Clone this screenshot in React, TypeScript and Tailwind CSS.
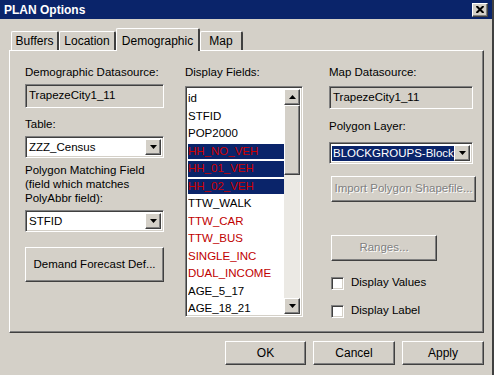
import React from 'react';

const raised =
  'border border-t-white border-l-white border-r-[#404040] border-b-[#404040] shadow-[inset_-1px_-1px_0_#808080]';
const sunken =
  'border border-t-[#808080] border-l-[#808080] border-r-white border-b-white shadow-[inset_1px_1px_0_#404040,inset_-1px_-1px_0_#d4d0c8]';

function Arrow({ up = false }: { up?: boolean }) {
  return (
    <svg width="7" height="4" viewBox="0 0 7 4">
      {up ? <path d="M3.5 0 L7 4 L0 4 Z" fill="#000" /> : <path d="M0 0 L7 0 L3.5 4 Z" fill="#000" />}
    </svg>
  );
}

function Combo({ value, selected = false, className = '' }: { value: string; selected?: boolean; className?: string }) {
  return (
    <div className={`${sunken} bg-white h-[22px] flex items-center pl-[2px] pr-[2px] ${className}`}>
      <div className="flex-1 min-w-0 flex items-center">
        <span className={`px-[1px] leading-[15px] whitespace-nowrap overflow-hidden ${selected ? 'bg-[#0a246a] text-white' : 'text-black'}`}>
          {value}
        </span>
      </div>
      <div className={`${raised} w-[16px] h-[16px] bg-[#d4d0c8] flex items-center justify-center shrink-0`}>
        <Arrow />
      </div>
    </div>
  );
}

function Button({ label, disabled = false, className = '' }: { label: string; disabled?: boolean; className?: string }) {
  return (
    <div className={`${raised} bg-[#d4d0c8] flex items-center justify-center ${className}`}>
      <span className={disabled ? 'text-[#808080] [text-shadow:1px_1px_0_#fff]' : 'text-black'}>{label}</span>
    </div>
  );
}

function Checkbox({ label }: { label: string }) {
  return (
    <div className="flex items-center gap-[7px] h-[14px]">
      <div className={`${sunken} bg-white w-[13px] h-[13px]`} />
      <span>{label}</span>
    </div>
  );
}

const fields: Array<[string, number]> = [
  ['id', 0],
  ['STFID', 0],
  ['POP2000', 0],
  ['HH_NO_VEH', 2],
  ['HH_01_VEH', 2],
  ['HH_02_VEH', 2],
  ['TTW_WALK', 0],
  ['TTW_CAR', 1],
  ['TTW_BUS', 1],
  ['SINGLE_INC', 1],
  ['DUAL_INCOME', 1],
  ['AGE_5_17', 0],
  ['AGE_18_21', 0],
];

function FieldList() {
  return (
    <div className={`${sunken} bg-white h-[231px] w-[118px] flex p-[2px] mt-[7px]`}>
      <div className="flex-1 pl-[0px] pt-[1px] overflow-hidden">
        {fields.map(([name, kind]) => (
          <div key={name} className="h-[17.5px] flex items-center">
            <div
              className={`h-[15.5px] w-full flex items-center leading-none ${
                kind === 2 ? 'bg-[#0a246a] text-[#d00000]' : kind === 1 ? 'text-[#c00000]' : 'text-black'
              }`}
            >
              {name}
            </div>
          </div>
        ))}
      </div>
      <div className="w-[16px] flex flex-col shrink-0">
        <div className={`${raised} h-[16px] bg-[#d4d0c8] flex items-center justify-center`}>
          <Arrow up />
        </div>
        <div className={`${raised} h-[70px] bg-[#d4d0c8]`} />
        <div className="flex-1 bg-[#ebe9e4]" />
        <div className={`${raised} h-[16px] bg-[#d4d0c8] flex items-center justify-center`}>
          <Arrow />
        </div>
      </div>
    </div>
  );
}

export default function App() {
  const tabs = [
    { name: 'Buffers', w: 'w-[48px]' },
    { name: 'Location', w: 'w-[57px]' },
    { name: 'Demographic', w: 'w-[84px]' },
    { name: 'Map', w: 'w-[43px]' },
  ];
  return (
    <div className="w-[494px] h-[375px] bg-[#d4d0c8] text-[11.5px] text-black font-['Liberation_Sans',Arial,sans-serif] border-r-2 border-r-[#404040] overflow-hidden flex flex-col">
      <div className="h-[19px] bg-[#0a246a] flex items-center pl-[4px] pr-[4px]">
        <span className="text-white font-bold text-[12px] flex-1">PLAN Options</span>
        <div className={`${raised} w-[16px] h-[14px] bg-[#d4d0c8] flex items-center justify-center`}>
          <svg width="8" height="7" viewBox="0 0 8 7">
            <path d="M0.5 0 L7.5 7 M7.5 0 L0.5 7" stroke="#000" strokeWidth="2" />
          </svg>
        </div>
      </div>

      <div className="pl-[9px] pr-[8px] pt-[9px]">
        <div className="flex items-end h-[22px] pl-[2px]">
          {tabs.map((t) =>
            t.name === 'Demographic' ? (
              <div
                key={t.name}
                className={`${t.w} h-[23px] -mb-px relative z-10 bg-[#d4d0c8] border-t border-l border-t-white border-l-white border-r-2 border-r-[#404040] rounded-t-[2px] flex items-start justify-center pt-[3px] text-[12px]`}
              >
                {t.name}
              </div>
            ) : (
              <div
                key={t.name}
                className={`${t.w} h-[19px] bg-[#d4d0c8] border-t border-l border-t-white border-l-white border-r-2 border-r-[#404040] rounded-t-[2px] flex items-center justify-center text-[12px]`}
              >
                {t.name}
              </div>
            )
          )}
        </div>

        <div className="h-[283px] border border-t-white border-l-white border-r-[#404040] border-b-[#404040] shadow-[inset_-1px_-1px_0_#808080] flex pl-[15px] pt-[14px]">
          <div className="w-[139px] flex flex-col">
            <div className="leading-[14px]">Demographic Datasource:</div>
            <div className={`${sunken} h-[24px] mt-[5px] flex items-center pl-[3px]`}>TrapezeCity1_11</div>
            <div className="leading-[14px] mt-[9px]">Table:</div>
            <Combo value="ZZZ_Census" className="mt-[5px]" />
            <div className="leading-[14px] mt-[5px]">
              Polygon Matching Field
              <br />
              (field which matches
              <br />
              PolyAbbr field):
            </div>
            <Combo value="STFID" className="mt-[5px]" />
            <Button label="Demand Forecast Def..." className="h-[35px] mt-[15px]" />
          </div>

          <div className="w-[118px] ml-[21px] flex flex-col">
            <div className="leading-[14px]">Display Fields:</div>
            <FieldList />
          </div>

          <div className="w-[147px] ml-[26px] flex flex-col">
            <div className="leading-[14px]">Map Datasource:</div>
            <div className={`${sunken} h-[23px] mt-[7px] w-[144px] flex items-center pl-[3px]`}>TrapezeCity1_11</div>
            <div className="leading-[14px] mt-[10px]">Polygon Layer:</div>
            <Combo value="BLOCKGROUPS-Block" selected className="mt-[9px] w-[144px]" />
            <Button label="Import Polygon Shapefile..." disabled className="h-[26px] mt-[12px] ml-[2px] w-[145px]" />
            <Button label="Ranges..." disabled className="h-[26px] mt-[33px] ml-[2px] w-[106px]" />
            <div className="flex flex-col gap-[14px] mt-[15px] ml-[2px]">
              <Checkbox label="Display Values" />
              <Checkbox label="Display Label" />
            </div>
          </div>
        </div>

        <div className="flex justify-end gap-[7px] mt-[8px] pr-[0px]">
          <Button label="OK" className="w-[81px] h-[24px] text-[12px]" />
          <Button label="Cancel" className="w-[82px] h-[24px] text-[12px]" />
          <Button label="Apply" className="w-[82px] h-[24px] text-[12px]" />
        </div>
      </div>
    </div>
  );
}
